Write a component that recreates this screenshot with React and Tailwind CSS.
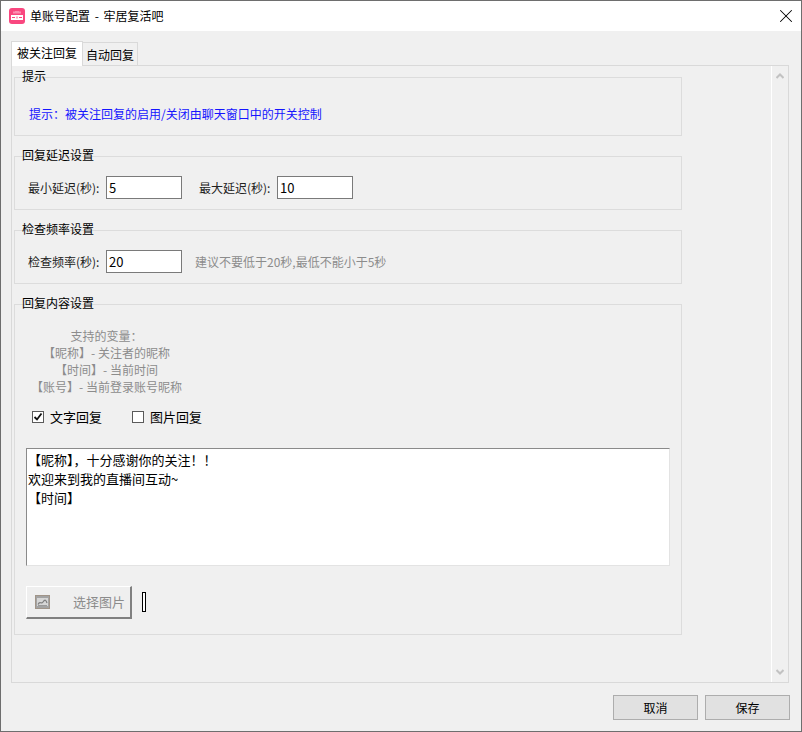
import { X } from 'lucide-react';

// Group box with its title sitting on the top border
function GroupBox({ title, className, children }) {
  return (
    <div className={`mx-[2px] border border-[#dcdcdc] ${className}`}>
      <div className="-mt-[11px] ml-[7px] h-[17px] leading-[17px] w-fit text-black">{title}</div>
      {children}
    </div>
  );
}

function TextField({ value }) {
  return (
    <div className="w-[76px] h-[23px] border border-[#7a7a7a] bg-white pl-[2px] leading-[21px] text-[13px] text-black">
      {value}
    </div>
  );
}

function AppIcon() {
  return (
    <svg width="16" height="16" viewBox="0 0 16 16" className="shrink-0 ml-[8px]">
      <rect width="16" height="16" rx="3" fill="#f9477f" />
      <path d="M5 3.5v2M7 3v2.5M9 3v2.5M11 3.5v2" stroke="#ffd5e3" strokeWidth="1" />
      <rect x="2" y="7" width="12" height="5" fill="#ffffff" />
      <path d="M3 9.5h3M8 8.5v2M10 9.5h3" stroke="#f9477f" strokeWidth="1" />
    </svg>
  );
}

function ImageIcon() {
  return (
    <svg width="15" height="14" viewBox="0 0 15 14" className="shrink-0">
      <rect x="0.5" y="0.5" width="14" height="13" fill="#a3a3a3" stroke="#a09488" />
      <rect x="2" y="3" width="11" height="8" fill="#d6d6d6" />
      <path d="M3 9.5 C5 5 6 10 8 7 S11 5 12 8" fill="none" stroke="#7d7d7d" strokeWidth="1.2" />
      <path d="M3 10.5 L12 10.5" stroke="#9a9a9a" />
    </svg>
  );
}

export default function App() {
  return (
    <div
      className="w-[802px] h-[732px] bg-[#f0f0f0] border border-[#6e6e6e] flex flex-col text-[12px] overflow-hidden"
      style={{ fontFamily: '"Noto Sans CJK SC", "Liberation Sans", sans-serif' }}
    >
      {/* title bar */}
      <div className="h-[30px] bg-white flex items-center shrink-0">
        <AppIcon />
        <span className="ml-[5px] text-black [word-spacing:2px]">单账号配置 - 牢居复活吧</span>
        <X size={22} strokeWidth={1.1} className="ml-auto mr-[4px] text-black" />
      </div>

      <div className="flex-1 flex flex-col pl-[10px] pr-[12px]">
        {/* tabs */}
        <div className="h-[34px] flex items-end shrink-0">
          <div className="w-[72px] h-[25px] bg-white border border-b-0 border-[#d9d9d9] leading-[22px] text-center text-black relative top-px">被关注回复</div>
          <div className="w-[55px] h-[23px] bg-[#f0f0f0] border border-l-0 border-b-0 border-[#d9d9d9] leading-[23px] text-center text-black">自动回复</div>
        </div>

        {/* tab page */}
        <div className="h-[618px] w-[778px] border border-[#d9d9d9] flex shrink-0">
          <div className="w-[759px] pt-[11px] flex flex-col">
            <div className="w-[672px] flex flex-col">
              <GroupBox title="提示" className="h-[59px]">
                <div className="mt-[21px] ml-[14px] text-[#1515ff] leading-[18px]">提示：被关注回复的启用/关闭由聊天窗口中的开关控制</div>
              </GroupBox>

              <GroupBox title="回复延迟设置" className="h-[54px] mt-[20px]">
                <div className="mt-[13px] flex items-center h-[23px]">
                  <span className="ml-[13px] w-[78px] text-[#222222]">最小延迟(秒):</span>
                  <TextField value="5" />
                  <span className="ml-[17px] w-[78px] text-[#222222]">最大延迟(秒):</span>
                  <TextField value="10" />
                </div>
              </GroupBox>

              <GroupBox title="检查频率设置" className="h-[54px] mt-[20px]">
                <div className="mt-[13px] flex items-center h-[23px]">
                  <span className="ml-[13px] w-[78px] text-[#222222]">检查频率(秒):</span>
                  <TextField value="20" />
                  <span className="ml-[13px] text-[#8c8c8c]">建议不要低于20秒,最低不能小于5秒</span>
                </div>
              </GroupBox>

              <GroupBox title="回复内容设置" className="h-[331px] mt-[20px]">
                <div className="mt-[16px] w-[183px] text-center text-[#8c8c8c] leading-[17px]">
                  <div>支持的变量：</div>
                  <div>【昵称】- 关注者的昵称</div>
                  <div>【时间】- 当前时间</div>
                  <div>【账号】- 当前登录账号昵称</div>
                </div>
                <div className="mt-[14px] ml-[17px] flex items-center h-[16px] text-black">
                  <span className="w-[12px] h-[12px] border border-[#5a5a5a] bg-white flex items-center justify-center">
                    <svg width="10" height="10" viewBox="0 0 10 10">
                      <path d="M1.5 5 L4 7.5 L8.5 1.5" fill="none" stroke="#111111" strokeWidth="1.8" />
                    </svg>
                  </span>
                  <span className="ml-[6px] w-[52px] text-[13px]">文字回复</span>
                  <span className="ml-[30px] w-[12px] h-[12px] border border-[#5a5a5a] bg-white"></span>
                  <span className="ml-[6px] text-[13px]">图片回复</span>
                </div>
                <div className="mt-[23px] ml-[11px] w-[644px] h-[118px] bg-white border border-t-[#8a8a8a] border-l-[#8a8a8a] border-r-[#e3e3e3] border-b-[#e3e3e3] pl-[1px] pt-[1px] text-black leading-[19px] text-[13px]">
                  <div>【昵称】，十分感谢你的关注！！</div>
                  <div>欢迎来到我的直播间互动~</div>
                  <div>【时间】</div>
                </div>
                <div className="mt-[20px] ml-[11px] flex items-center">
                  <div className="w-[106px] h-[33px] bg-[#efefef] border border-t-white border-l-white border-r-[#808080] border-b-[#808080] border-r-2 border-b-2 flex items-center pl-[8px] text-[#8c8c8c]">
                    <ImageIcon />
                    <span className="ml-[23px] text-[13px]">选择图片</span>
                  </div>
                  <div className="ml-[10px] mb-[2px] w-[2px] h-[18px] box-content border border-black bg-white"></div>
                </div>
              </GroupBox>
            </div>
          </div>

          {/* scroll bar */}
          <div className="w-[17px] border-l border-white flex flex-col items-center justify-between py-[7px] text-[#c2c2c2]">
            <svg width="8" height="6" viewBox="0 0 8 6"><path d="M0.5 5 L4 1.5 L7.5 5" fill="none" stroke="#c2c2c2" strokeWidth="2" /></svg>
            <svg width="8" height="6" viewBox="0 0 8 6"><path d="M0.5 1 L4 4.5 L7.5 1" fill="none" stroke="#c2c2c2" strokeWidth="2" /></svg>
          </div>
        </div>

        {/* footer buttons */}
        <div className="mt-[12px] flex justify-end gap-[7px] mr-[-1px]">
          <button className="w-[85px] h-[25px] bg-[#e1e1e1] border border-[#adadad] text-black text-[12px] leading-[23px]">取消</button>
          <button className="w-[85px] h-[25px] bg-[#e1e1e1] border border-[#adadad] text-black text-[12px] leading-[23px]">保存</button>
        </div>
      </div>
    </div>
  );
}
